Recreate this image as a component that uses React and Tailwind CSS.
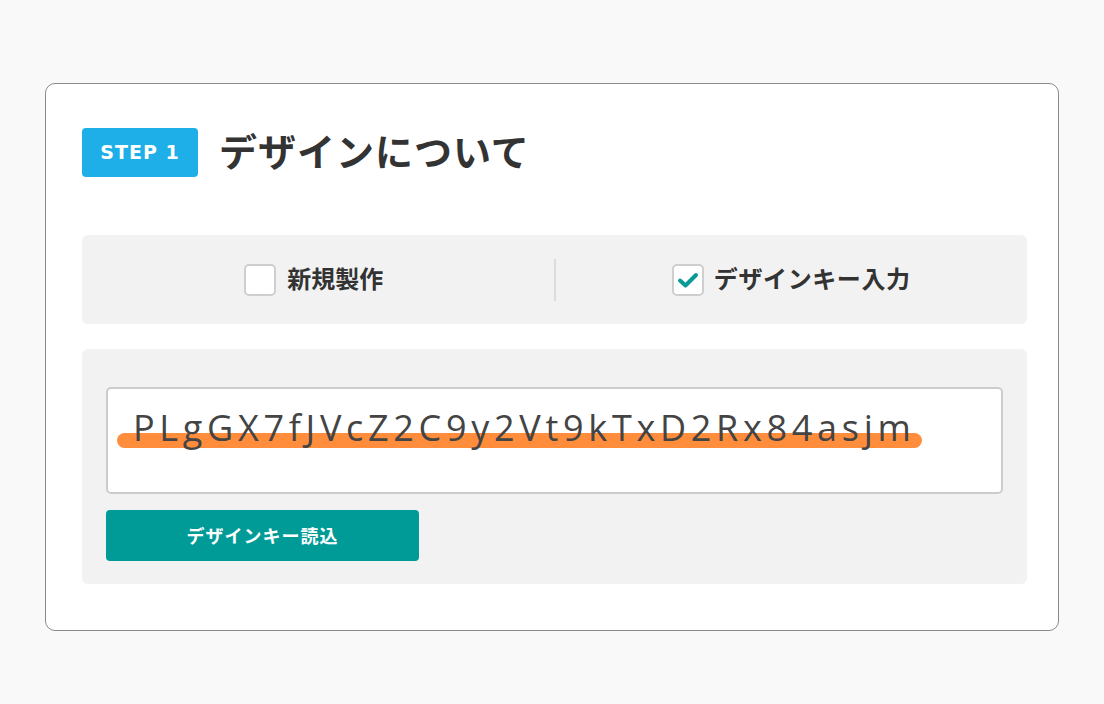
import React from "react";

const jp = { fontFamily: '"Noto Sans CJK JP", "Noto Sans", sans-serif' };

function Checkbox({ checked }) {
  return (
    <div className="w-[32px] h-[32px] rounded-[5px] border-2 border-[#cfcfcf] bg-white flex items-center justify-center">
      {checked && (
        <svg width="22" height="18" viewBox="0 0 22 18">
          <path d="M3 9.5 L8.5 14.5 L19 4" fill="none" stroke="#0a9a96" strokeWidth="4" strokeLinecap="round" strokeLinejoin="round" />
        </svg>
      )}
    </div>
  );
}

export default function App() {
  return (
    <div className="w-[1104px] h-[704px] bg-[#f9f9f9] pt-[83px] pl-[45px]" style={jp}>
      <div className="w-[1014px] h-[548px] bg-white border border-[#8a8a8a] rounded-[10px] pl-[36px] pr-[31px] pt-[44px]">
        <div className="flex items-center">
          <div
            className="w-[116px] h-[49px] rounded-[4px] bg-[#1eafe9] text-white flex items-center justify-center text-[19px] font-bold tracking-[1px]"
            style={{ fontFamily: '"DejaVu Sans", sans-serif' }}
          >
            STEP 1
          </div>
          <div className="ml-[21px] text-[38px] font-bold text-[#333333] leading-none -mt-[6px] tracking-[1px]">デザインについて</div>
        </div>

        <div className="mt-[58px] h-[89px] bg-[#f2f2f2] rounded-[6px] flex items-center">
          <div className="flex-1 flex items-center justify-center">
            <div className="flex items-center gap-[11px] mr-[8px]">
              <Checkbox checked={false} />
              <span className="text-[24px] font-bold text-[#333333] leading-none -mt-[3px]">新規製作</span>
            </div>
          </div>
          <div className="w-[2px] h-[42px] bg-[#dcdcdc]" />
          <div className="flex-1 flex items-center justify-center">
            <div className="flex items-center gap-[10px]">
              <Checkbox checked={true} />
              <span className="text-[24px] font-bold text-[#333333] leading-none tracking-[0.6px] -mt-[3px]">デザインキー入力</span>
            </div>
          </div>
        </div>

        <div className="mt-[25px] h-[235px] bg-[#f2f2f2] rounded-[6px] pt-[38px] px-[24px]">
          <div className="w-[897px] h-[107px] bg-white border-2 border-[#cccccc] rounded-[5px] pl-[25px] pt-[14px]">
            <div className="relative inline-block">
              <div className="absolute left-[-16px] right-[-7px] top-[30px] h-[15px] rounded-full bg-[#ff8d3b]" />
              <span
                className="relative text-[36px] leading-[50px] text-[#444444] tracking-[4.7px]"
                style={{ fontFamily: '"Open Sans", "Noto Sans", sans-serif' }}
              >
                PLgGX7fJVcZ2C9y2Vt9kTxD2Rx84asjm
              </span>
            </div>
          </div>
          <button className="mt-[16px] w-[313px] h-[51px] rounded-[4px] bg-[#009b97] text-white text-[18px] font-bold flex items-center justify-center tracking-[1px]">
            デザインキー読込
          </button>
        </div>
      </div>
    </div>
  );
}
